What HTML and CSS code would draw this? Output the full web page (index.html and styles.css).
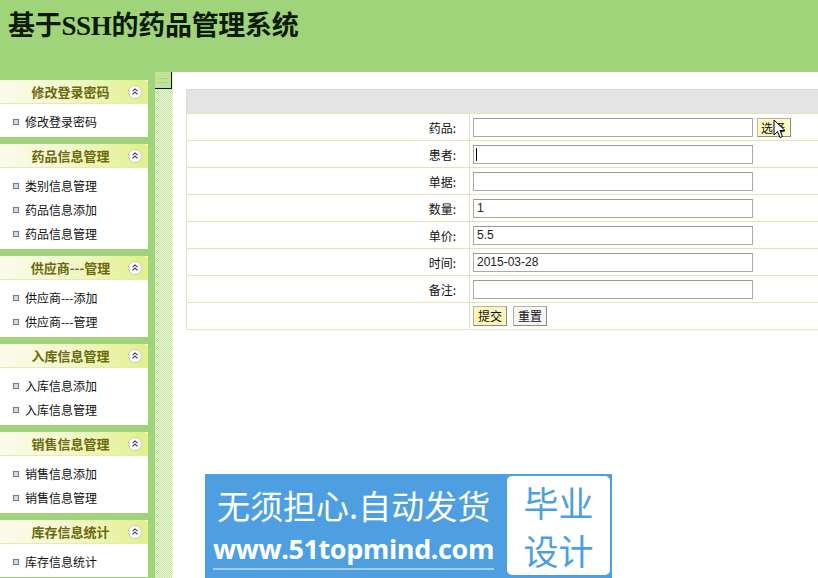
FILE: index.html
```html
<!DOCTYPE html>
<html lang="zh-CN">
<head>
<meta charset="utf-8">
<title>基于SSH的药品管理系统</title>
<link rel="stylesheet" href="styles.css">
</head>
<body>
<div class="page">
  <header class="top">
    <h1 class="title">基于SSH的药品管理系统</h1>
  </header>
  <div class="body">
    <aside class="side">
      <section class="panel">
        <div class="ph"><span class="pt">修改登录密码</span><span class="tog"><svg viewBox="0 0 16 16" width="16" height="16"><circle cx="8" cy="8" r="6.5" fill="#fff" stroke="#c9c9b8"/><path d="M5.5 7.2 8 4.9 10.5 7.2M5.5 10.4 8 8.1 10.5 10.4" fill="none" stroke="#3a3a4a" stroke-width="1.1"/></svg></span></div>
        <ul class="pb"><li>修改登录密码</li></ul>
      </section>
      <section class="panel">
        <div class="ph"><span class="pt">药品信息管理</span><span class="tog"><svg viewBox="0 0 16 16" width="16" height="16"><circle cx="8" cy="8" r="6.5" fill="#fff" stroke="#c9c9b8"/><path d="M5.5 7.2 8 4.9 10.5 7.2M5.5 10.4 8 8.1 10.5 10.4" fill="none" stroke="#3a3a4a" stroke-width="1.1"/></svg></span></div>
        <ul class="pb"><li>类别信息管理</li><li>药品信息添加</li><li>药品信息管理</li></ul>
      </section>
      <section class="panel">
        <div class="ph"><span class="pt">供应商---管理</span><span class="tog"><svg viewBox="0 0 16 16" width="16" height="16"><circle cx="8" cy="8" r="6.5" fill="#fff" stroke="#c9c9b8"/><path d="M5.5 7.2 8 4.9 10.5 7.2M5.5 10.4 8 8.1 10.5 10.4" fill="none" stroke="#3a3a4a" stroke-width="1.1"/></svg></span></div>
        <ul class="pb"><li>供应商---添加</li><li>供应商---管理</li></ul>
      </section>
      <section class="panel">
        <div class="ph"><span class="pt">入库信息管理</span><span class="tog"><svg viewBox="0 0 16 16" width="16" height="16"><circle cx="8" cy="8" r="6.5" fill="#fff" stroke="#c9c9b8"/><path d="M5.5 7.2 8 4.9 10.5 7.2M5.5 10.4 8 8.1 10.5 10.4" fill="none" stroke="#3a3a4a" stroke-width="1.1"/></svg></span></div>
        <ul class="pb"><li>入库信息添加</li><li>入库信息管理</li></ul>
      </section>
      <section class="panel">
        <div class="ph"><span class="pt">销售信息管理</span><span class="tog"><svg viewBox="0 0 16 16" width="16" height="16"><circle cx="8" cy="8" r="6.5" fill="#fff" stroke="#c9c9b8"/><path d="M5.5 7.2 8 4.9 10.5 7.2M5.5 10.4 8 8.1 10.5 10.4" fill="none" stroke="#3a3a4a" stroke-width="1.1"/></svg></span></div>
        <ul class="pb"><li>销售信息添加</li><li>销售信息管理</li></ul>
      </section>
      <section class="panel">
        <div class="ph"><span class="pt">库存信息统计</span><span class="tog"><svg viewBox="0 0 16 16" width="16" height="16"><circle cx="8" cy="8" r="6.5" fill="#fff" stroke="#c9c9b8"/><path d="M5.5 7.2 8 4.9 10.5 7.2M5.5 10.4 8 8.1 10.5 10.4" fill="none" stroke="#3a3a4a" stroke-width="1.1"/></svg></span></div>
        <ul class="pb"><li>库存信息统计</li></ul>
      </section>
    </aside>
    <div class="split"><div class="split-btn"><span class="split-line"></span></div></div>
    <main class="main">
      <table class="form">
        <tr class="hd"><td colspan="2"></td></tr>
        <tr><td class="lb">药品:</td><td class="fd"><span class="inp"></span><span class="btn sel">选择</span></td></tr>
        <tr><td class="lb">患者:</td><td class="fd"><span class="inp"><span class="caret"></span></span></td></tr>
        <tr><td class="lb">单据:</td><td class="fd"><span class="inp"></span></td></tr>
        <tr><td class="lb">数量:</td><td class="fd"><span class="inp">1</span></td></tr>
        <tr><td class="lb">单价:</td><td class="fd"><span class="inp">5.5</span></td></tr>
        <tr><td class="lb">时间:</td><td class="fd"><span class="inp">2015-03-28</span></td></tr>
        <tr><td class="lb">备注:</td><td class="fd"><span class="inp"></span></td></tr>
        <tr><td class="lb"></td><td class="fd"><span class="btn sub">提交</span><span class="btn rst">重置</span></td></tr>
      </table>
    </main>
  </div>
  <svg class="cursor" viewBox="0 0 13 20" width="13" height="20"><path d="M1 1 L1 16 L4.5 12.5 L7 18.5 L9.5 17.5 L7 11.5 L12 11.5 Z" fill="#fff" stroke="#000" stroke-width="1" stroke-linejoin="round"/></svg>
  <div class="ad">
    <div class="ad-left">
      <div class="ad-l1">无须担心.自动发货</div>
      <div class="ad-l2">www.51topmind.com</div>
    </div>
    <div class="ad-right">
      <div class="ad-r">毕业</div>
      <div class="ad-r">设计</div>
    </div>
  </div>
</div>
</body>
</html>
```

FILE: styles.css
```css
html, body {
  margin: 0;
  padding: 0;
}
body {
  width: 818px;
  height: 578px;
  overflow: hidden;
  background: #fff;
  font-family: "Noto Sans CJK SC", "Liberation Sans", sans-serif;
  font-size: 12px;
  color: #000;
}
.page {
  position: relative;
  width: 818px;
  height: 578px;
  overflow: hidden;
  display: flex;
  flex-direction: column;
}
.top {
  height: 72px;
  flex: none;
  background: #a0d47b;
  padding: 10px 0 0 8px;
  box-sizing: border-box;
}
.title {
  margin: 0;
  font-family: "Liberation Serif", "Noto Sans CJK SC", serif;
  font-weight: bold;
  font-size: 27px;
  line-height: 32px;
  color: #0c1a06;
  letter-spacing: -0.3px;
}
.body {
  flex: 1;
  display: flex;
  min-height: 0;
}
.side {
  width: 155px;
  flex: none;
  background: #a0d47b;
  padding: 8px 7px 0 0;
  box-sizing: border-box;
  display: flex;
  flex-direction: column;
  gap: 7px;
}
.panel {
  background: #fff;
  flex: none;
}
.ph {
  height: 24px;
  display: flex;
  align-items: center;
  background: linear-gradient(to right, #fbfbec 0%, #f3f7cf 45%, #e2f08c 100%);
  border-bottom: 1px solid #e1ecb0;
  box-sizing: border-box;
  border-top-right-radius: 4px;
}
.pt {
  flex: 1;
  text-align: center;
  padding-left: 20px;
  font-weight: bold;
  color: #6a6a0c;
  font-size: 13px;
}
.tog {
  width: 16px;
  height: 16px;
  margin: 0 5px 0 6px;
  display: flex;
}
.pb {
  list-style: none;
  margin: 0;
  padding: 6px 0 3px 0;
}
.pb li {
  height: 24px;
  line-height: 24px;
  padding-left: 25px;
  position: relative;
  color: #111;
}
.pb li::before {
  content: "";
  position: absolute;
  left: 13px;
  top: 9px;
  width: 4px;
  height: 4px;
  border: 1px solid #6f7f90;
  background: #d2dae2;
}
.split {
  width: 17px;
  flex: none;
  background: repeating-conic-gradient(#c4e59d 0 25%, #eef8df 0 50%) 0 0 / 2px 2px;
  border-right: 1px solid #e8f3dc;
}
.split-btn {
  width: 16px;
  height: 16px;
  background: #c1e399;
  border-right: 1px solid #111;
  border-bottom: 1px solid #111;
  display: flex;
  align-items: center;
  justify-content: center;
}
.split-line {
  width: 10px;
  height: 3px;
  border-top: 1px solid #a8d47e;
  border-bottom: 1px solid #a8d47e;
}
.main {
  flex: 1;
  background: #fff;
  padding: 17px 0 0 13px;
  overflow: hidden;
}
.form {
  border-collapse: collapse;
  width: 700px;
  border-left: 1px solid #e4e1bd;
}
.form td {
  border-top: 1px solid #e4e1bd;
  border-bottom: 1px solid #e4e1bd;
  height: 26px;
  padding: 0;
}
.form tr.hd td {
  height: 23px;
  background: #e4e4e4;
  border-top: 1px solid #dcdcdc;
  border-bottom: 1px solid #e4e1bd;
}
.lb {
  width: 269px;
  text-align: right;
  padding-right: 13px !important;
  border-right: 1px solid #e4e1bd;
  color: #111;
}
.fd {
  padding-left: 3px !important;
}
.inp {
  display: inline-block;
  vertical-align: middle;
  width: 280px;
  height: 19px;
  box-sizing: border-box;
  border: 1px solid #a9a9a9;
  border-top-color: #9a9a9a;
  font-family: "Liberation Sans", sans-serif;
  font-size: 12px;
  line-height: 17px;
  padding-left: 3px;
  color: #222;
  position: relative;
}
.caret {
  position: absolute;
  left: 2px;
  top: 2px;
  width: 1px;
  height: 13px;
  background: #000;
}
.btn {
  display: inline-block;
  vertical-align: middle;
  height: 19px;
  box-sizing: border-box;
  line-height: 17px;
  padding: 0 3px;
  border: 1px solid #b5b5a5;
  border-right-color: #8c8c80;
  border-bottom-color: #8c8c80;
  font-size: 12px;
  color: #111;
}
.sel {
  background: #fcf9c4;
  margin-left: 4px;
  width: 34px;
  text-align: left;
}
.sub {
  background: #fbf6b8;
  width: 34px;
  height: 20px;
  line-height: 18px;
  text-align: center;
}
.rst {
  background: #f6f6f4;
  width: 34px;
  height: 20px;
  line-height: 18px;
  text-align: center;
  margin-left: 6px;
}
.cursor {
  position: absolute;
  left: 773px;
  top: 119px;
}
.ad {
  position: absolute;
  left: 205px;
  top: 474px;
  width: 407px;
  height: 104px;
  background: #4d9fe2;
  display: flex;
  align-items: center;
  padding: 2px 2px 3px 0;
  box-sizing: border-box;
}
.ad-left {
  flex: 1;
  padding-left: 8px;
  color: #fff;
  display: flex;
  flex-direction: column;
  align-items: flex-start;
}
.ad-l1 {
  font-size: 33px;
  line-height: 46px;
  padding-left: 4px;
}
.ad-l2 {
  font-family: "Open Sans", "Liberation Sans", sans-serif;
  font-weight: bold;
  font-size: 27px;
  line-height: 38px;
  letter-spacing: -0.4px;
  border-bottom: 2px solid #a7cdf0;
  margin-top: 2px;
}
.ad-right {
  width: 103px;
  height: 99px;
  background: #fff;
  border-radius: 5px;
  color: #4d9fe2;
  display: flex;
  flex-direction: column;
  align-items: center;
  justify-content: center;
}
.ad-r {
  font-size: 35px;
  line-height: 48px;
}
```
